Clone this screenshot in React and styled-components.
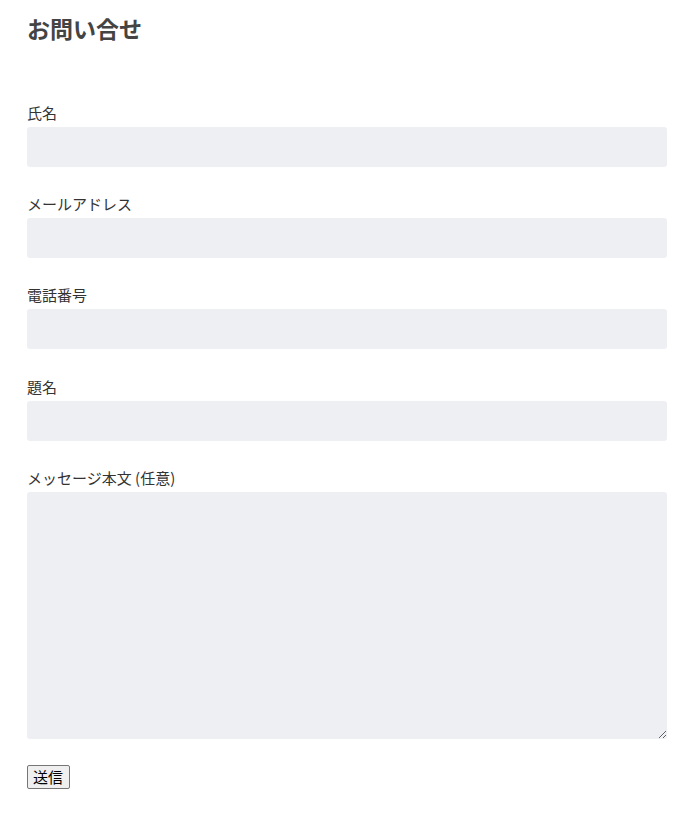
import React from 'react';
import styled, { createGlobalStyle } from 'styled-components';

const GlobalStyle = createGlobalStyle`
  body {
    margin: 0;
    background: #fff;
    font-family: "Noto Sans CJK JP", "Noto Sans", sans-serif;
    color: #333;
  }
`;

const Page = styled.div`
  padding: 13px 24px 40px 27px;
`;

const Title = styled.h2`
  margin: 0 0 60px;
  font-size: 23px;
  line-height: 30px;
  font-weight: 700;
  color: #444;
`;

const Form = styled.form`
  display: flex;
  flex-direction: column;
`;

const Field = styled.div`
  display: flex;
  flex-direction: column;
  margin-bottom: ${(p) => p.$gap || 27}px;
`;

const Label = styled.label`
  font-size: 15px;
  line-height: 19px;
  margin-bottom: 5px;
  color: #333;
`;

const Input = styled.input`
  box-sizing: border-box;
  width: 100%;
  height: 40px;
  border: none;
  border-radius: 3px;
  background: #eeeff3;
  padding: 0 10px;
  font: inherit;
  outline: none;
`;

const TextArea = styled.textarea`
  box-sizing: border-box;
  display: block;
  width: 100%;
  height: 247px;
  border: none;
  border-radius: 3px;
  background: #eeeff3;
  padding: 8px 10px;
  font: inherit;
  outline: none;
`;

const Submit = styled.button`
  align-self: flex-start;
  font-family: "Noto Sans CJK JP", sans-serif;
  font-size: 15px;
  line-height: 20px;
  padding: 1px 6px 1px 5px;
  border: 1px solid #767676;
  border-radius: 2px;
  background: #efefef;
  color: #000;
`;

const fields = [
  { id: 'name', label: '氏名', type: 'text' },
  { id: 'email', label: 'メールアドレス', type: 'email' },
  { id: 'tel', label: '電話番号', type: 'tel', gap: 28 },
  { id: 'subject', label: '題名', type: 'text' },
];

export default function App() {
  return (
    <>
      <GlobalStyle />
      <Page>
        <Title>お問い合せ</Title>
        <Form onSubmit={(e) => e.preventDefault()}>
          {fields.map((f) => (
            <Field key={f.id} $gap={f.gap}>
              <Label htmlFor={f.id}>{f.label}</Label>
              <Input id={f.id} type={f.type} />
            </Field>
          ))}
          <Field $gap={26}>
            <Label htmlFor="message">メッセージ本文 (任意)</Label>
            <TextArea id="message" />
          </Field>
          <Submit type="submit">送信</Submit>
        </Form>
      </Page>
    </>
  );
}
